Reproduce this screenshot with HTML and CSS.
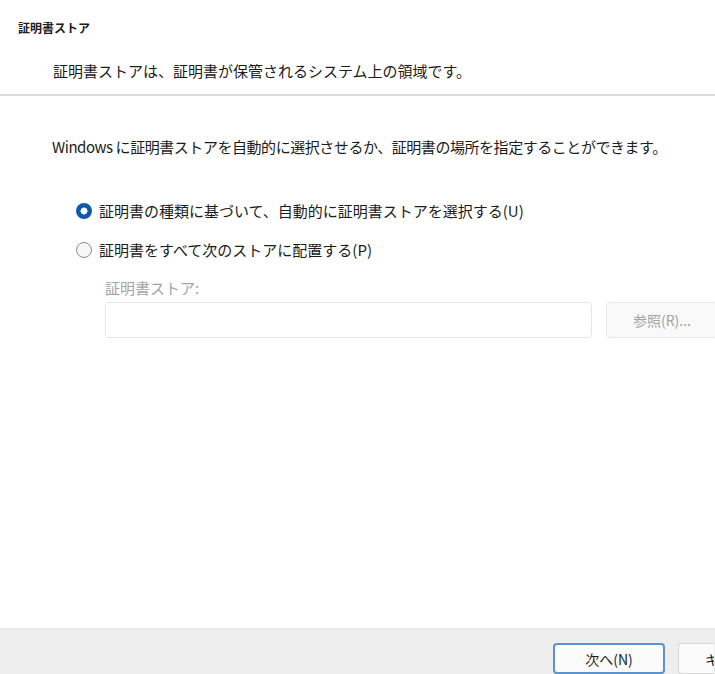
FILE: index.html
```html
<!DOCTYPE html>
<html lang="ja">
<head>
<meta charset="utf-8">
<link rel="stylesheet" href="styles.css">
</head>
<body>
<div class="dialog">
  <header class="head">
    <div class="title">証明書ストア</div>
    <div class="subtitle">証明書ストアは、証明書が保管されるシステム上の領域です。</div>
  </header>
  <main class="content">
    <p class="intro">Windows に証明書ストアを自動的に選択させるか、証明書の場所を指定することができます。</p>
    <div class="options">
      <label class="opt"><span class="radio checked"></span><span class="opt-text">証明書の種類に基づいて、自動的に証明書ストアを選択する(U)</span></label>
      <label class="opt"><span class="radio"></span><span class="opt-text">証明書をすべて次のストアに配置する(P)</span></label>
    </div>
    <div class="store">
      <div class="store-label">証明書ストア:</div>
      <div class="store-row">
        <div class="field"></div>
        <div class="btn disabled">参照(R)...</div>
      </div>
    </div>
  </main>
  <footer class="foot">
    <div class="btn primary">次へ(N)</div>
    <div class="btn cancel">キャンセル</div>
  </footer>
</div>
</body>
</html>
```
FILE: styles.css
```css
html, body {
  margin: 0;
  padding: 0;
  width: 715px;
  height: 674px;
  overflow: hidden;
  background: #ffffff;
}
.dialog {
  display: flex;
  flex-direction: column;
  width: 715px;
  height: 674px;
  overflow: hidden;
  font-family: "Noto Sans CJK JP", "Noto Sans", sans-serif;
  color: #1c1c1c;
}
.head {
  height: 94px;
  border-bottom: 2px solid #dadada;
  box-sizing: content-box;
  flex: none;
}
.title {
  margin: 20px 0 0 18px;
  font-size: 12px;
  line-height: 16px;
  font-weight: 700;
  color: #202020;
}
.subtitle {
  margin: 25px 0 0 53px;
  font-size: 15px;
  line-height: 20px;
}
.content {
  flex: 1;
  padding: 41px 0 0 52px;
}
.intro {
  margin: 0;
  font-size: 15px;
  line-height: 20px;
  letter-spacing: -0.45px;
  white-space: nowrap;
}
.options {
  display: flex;
  flex-direction: column;
  gap: 19px;
  margin: 44px 0 0 24px;
}
.opt {
  display: flex;
  align-items: center;
  gap: 7px;
  height: 20px;
  font-size: 15px;
  line-height: 20px;
}
.radio {
  width: 14px;
  height: 14px;
  border: 1px solid #8c8c8c;
  border-radius: 50%;
  background: #f6f6f6;
  flex: none;
}
.radio.checked {
  width: 16px;
  height: 16px;
  border: none;
  background: radial-gradient(circle, #ffffff 0 3.2px, #0b5cad 3.8px);
}
.store {
  margin: 18px 0 0 53px;
}
.store-label {
  font-size: 15px;
  line-height: 20px;
  color: #a3a3a3;
}
.store-row {
  display: flex;
  gap: 14px;
  margin-top: 4px;
}
.field {
  width: 485px;
  height: 34px;
  border: 1px solid #e6e6e6;
  border-radius: 4px;
  background: #ffffff;
  flex: none;
}
.btn {
  box-sizing: border-box;
  display: flex;
  align-items: center;
  justify-content: center;
  font-size: 14px;
  border-radius: 4px;
  flex: none;
  white-space: nowrap;
}
.btn.disabled {
  width: 112px;
  height: 36px;
  border: 1px solid #e8e8e8;
  background: #f9f9f9;
  color: #a3a3a3;
}
.foot {
  flex: none;
  height: 31px;
  border-top: 1px solid #e4e4e4;
  background: #eeeeee;
  display: flex;
  align-items: flex-start;
  gap: 13px;
  padding: 14px 0 0 553px;
  box-sizing: content-box;
}
.btn.primary {
  width: 112px;
  height: 31px;
  border: 2px solid #5b93cf;
  background: #fbfbfb;
  color: #1c1c1c;
}
.btn.cancel {
  width: 36px;
  height: 31px;
  border: 1px solid #d6d6d6;
  border-right: none;
  border-radius: 4px 0 0 4px;
  background: #fbfbfb;
  color: #1c1c1c;
  justify-content: flex-start;
  padding-left: 26px;
  overflow: hidden;
}
```
